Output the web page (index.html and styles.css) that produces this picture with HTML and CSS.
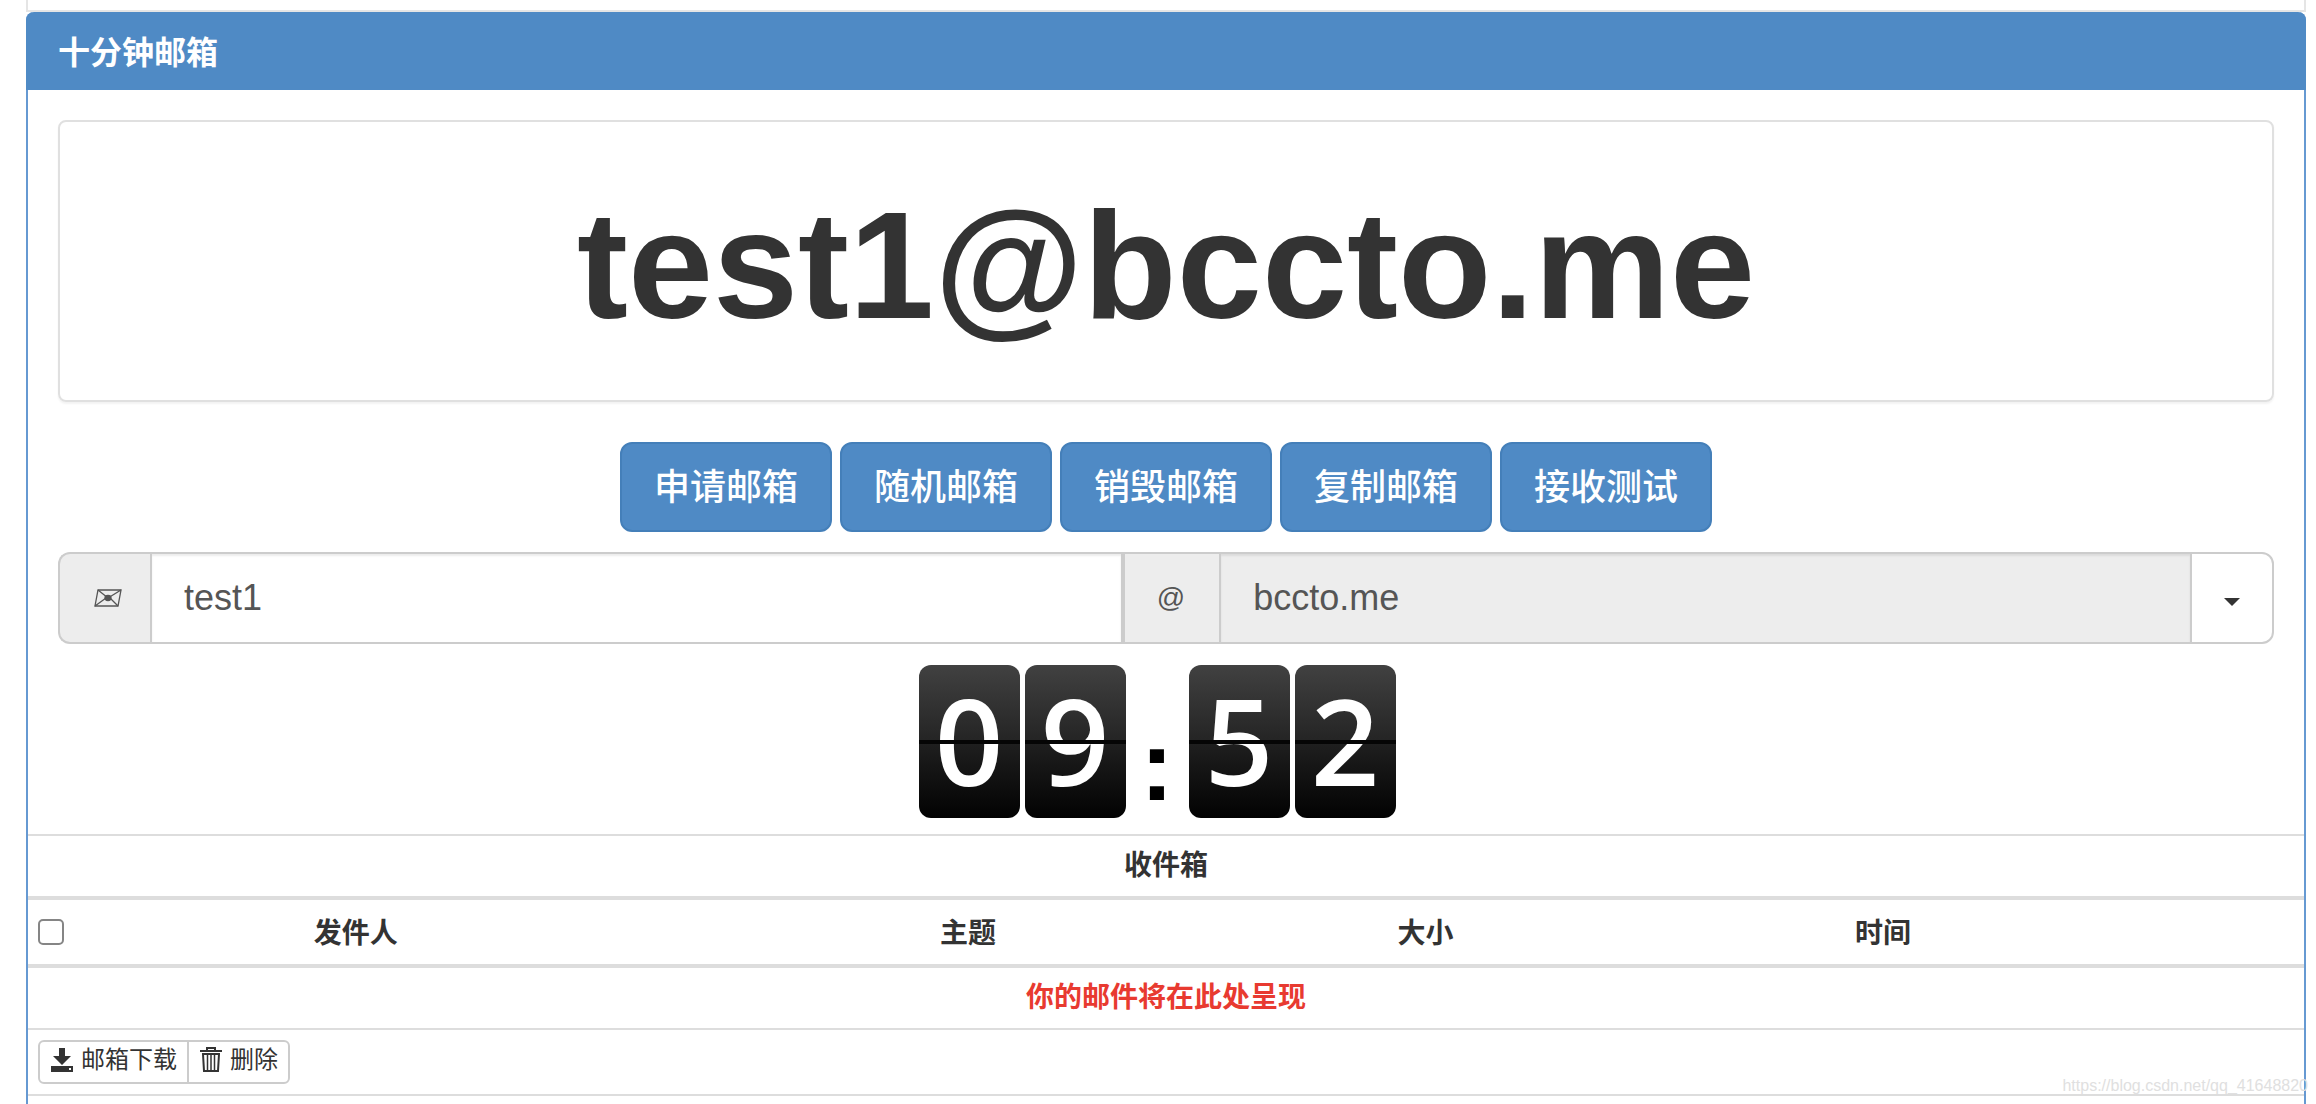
FILE: index.html
```html
<!DOCTYPE html>
<html lang="zh-CN">
<head>
    <meta charset="utf-8">
    <title>十分钟邮箱</title>
    <link rel="stylesheet" href="styles.css">
</head>
<body>

    <div class="container">
        <div class="top-box"></div>

        <div class="panel">
            <div class="panel-heading">十分钟邮箱</div>

            <div class="panel-body">
                <div class="thumbnail">
                    <h1>test1@bccto.me</h1>
                </div>

                <div class="btn-row">
                    <button type="button" class="btn-primary">申请邮箱</button>
                    <button type="button" class="btn-primary">随机邮箱</button>
                    <button type="button" class="btn-primary">销毁邮箱</button>
                    <button type="button" class="btn-primary">复制邮箱</button>
                    <button type="button" class="btn-primary">接收测试</button>
                </div>

                <div class="input-group">
                    <label class="addon" for="mailuser">
                        <svg width="28" height="20" viewBox="0 0 28 20" fill="none" stroke="#555" stroke-width="1.3">
                            <path d="M4 2H27L24 18H1Z"/>
                            <path d="M4 2L14 10L27 2M1 18L12 10M24 18L16 10"/>
                            <ellipse cx="14" cy="10" rx="3" ry="2.500" fill="#555"/>
                        </svg>
                    </label>
                    <input type="text" class="form-control" id="mailuser" value="test1">
                    <label class="addon" for="maildomain">@</label>
                    <input type="text" class="form-control" id="maildomain" value="bccto.me" readonly>
                    <button type="button" class="dropdown-toggle" aria-label="bccto.me"><span class="caret"></span></button>
                </div>
            </div>

            <!-- Countdown -->
            <div class="clock">
                <span class="digit">0</span>
                <span class="digit">9</span>
                <span class="colon">:</span>
                <span class="digit">5</span>
                <span class="digit">2</span>
            </div>

            <!-- Inbox -->
            <table class="table">
                <colgroup>
                    <col class="col-check">
                    <col class="col-from">
                    <col class="col-subject">
                    <col class="col-size">
                    <col class="col-time">
                    <col class="col-end">
                </colgroup>
                <thead>
                    <tr class="title-row">
                        <th colspan="6">收件箱</th>
                    </tr>
                    <tr class="head-row">
                        <th class="check-cell"><input type="checkbox" aria-label="收件箱"></th>
                        <th>发件人</th>
                        <th>主题</th>
                        <th>大小</th>
                        <th>时间</th>
                        <th></th>
                    </tr>
                </thead>
                <tbody>
                    <tr>
                        <td colspan="6" class="empty">你的邮件将在此处呈现</td>
                    </tr>
                    <tr>
                        <td colspan="6" class="actions">
                            <div class="btn-group">
                                <button type="button" class="btn-xs">
                                    <svg width="24" height="26" viewBox="0 0 24 26">
                                        <path fill="#333" d="M9 1H15V9H21L12 18L3 9H9Z"/>
                                        <path fill="#333" d="M1 19H23V25H1Z"/>
                                        <rect x="19" y="21" width="2" height="2" fill="#fff"/>
                                    </svg>
                                    邮箱下载
                                </button>
                                <button type="button" class="btn-xs">
                                    <svg width="24" height="26" viewBox="0 0 24 26" fill="none" stroke="#333" stroke-width="2">
                                        <path d="M1 4H23M8 4V1H16V4M4 7H20L19 24H5Z"/>
                                        <path d="M8.500 8V23M12 8V23M15.500 8V23" stroke-width="1.500"/>
                                    </svg>
                                    删除
                                </button>
                            </div>
                        </td>
                    </tr>
                </tbody>
            </table>
        </div>
    </div>

    <div class="watermark">https://blog.csdn.net/qq_41648820</div>

</body>
</html>
```
FILE: styles.css
```css
* {
    box-sizing: border-box;
}

body {
    margin: 0;
    font-family: "Liberation Sans", "Noto Sans CJK SC", sans-serif;
    font-size: 28px;
    line-height: 40px;
    color: #333;
    background: #fff;
}

button, input {
    font-family: inherit;
    margin: 0;
}

.container {
    display: flex;
    flex-direction: column;
    min-height: 100vh;
    padding: 0 10px 0 26px;
}

.top-box {
    height: 12px;
    border: 2px solid #e5e5e5;
    border-top: none;
}

.panel {
    flex: 1;
    border: 2px solid #6699d2;
    border-top: none;
    border-bottom: none;
    border-radius: 8px 8px 0 0;
}

.panel-heading {
    margin: 0 -2px;
    padding: 21px 32px 17px;
    font-size: 32px;
    font-weight: bold;
    color: #fff;
    background: #4f8ac5;
    border-radius: 8px 8px 0 0;
}

.panel-body {
    padding: 30px 30px 0;
}

.thumbnail {
    padding: 62px 0 54px;
    margin-bottom: 40px;
    border: 2px solid #e0e0e0;
    border-radius: 8px;
    box-shadow: 0 2px 2px rgba(0, 0, 0, 0.05);
}

.thumbnail h1 {
    margin: 0;
    font-size: 153px;
    line-height: 162px;
    text-align: center;
}

.btn-row {
    display: flex;
    justify-content: center;
    gap: 8px;
    margin-bottom: 20px;
}

.btn-primary {
    padding: 20px 32px 18px;
    font-size: 36px;
    font-weight: 500;
    line-height: 48px;
    color: #fff;
    background: #4f8ac5;
    border: 2px solid #447fb9;
    border-radius: 12px;
    cursor: pointer;
}

/* mail address input */
.input-group {
    display: flex;
    height: 92px;
}

.addon {
    display: flex;
    align-items: center;
    justify-content: center;
    padding: 0 34px 0 32px;
    font-size: 28px;
    color: #555;
    background: #ededed;
    border: 2px solid #ccc;
    border-right: none;
}

.addon:first-child {
    padding: 0 28px 0 34px;
    border-radius: 12px 0 0 12px;
}

.form-control {
    flex: 1;
    min-width: 0;
    padding: 0 32px;
    font-size: 36px;
    color: #555;
    background: #fff;
    border: 2px solid #ccc;
    box-shadow: inset 0 2px 2px rgba(0, 0, 0, 0.075);
}

.form-control[readonly] {
    background: #ededed;
}

.dropdown-toggle {
    display: flex;
    align-items: center;
    padding: 8px 32px 0;
    margin-left: -2px;
    background: #fff;
    border: 2px solid #ccc;
    border-radius: 0 12px 12px 0;
    cursor: pointer;
}

.caret {
    border: 8px solid transparent;
    border-top-color: #333;
    border-bottom: none;
}

/* flip clock */
.clock {
    display: flex;
    justify-content: center;
    gap: 5px;
    padding: 21px 18px 16px 0;
}

.digit {
    position: relative;
    width: 101px;
    height: 153px;
    font-family: "Open Sans", "Noto Sans", sans-serif;
    font-size: 120px;
    font-weight: 600;
    line-height: 150px;
    text-align: center;
    color: #fff;
    background: linear-gradient(#414141, #242424 50%, #1f1f1f 51%, #020202);
    border-radius: 12px;
}

.digit::after {
    content: "";
    position: absolute;
    left: 0;
    right: 0;
    top: 75px;
    height: 4px;
    background: #050505;
}

.colon {
    width: 53px;
    font-size: 100px;
    font-weight: bold;
    line-height: 200px;
    height: 153px;
    text-align: center;
    color: #000;
}

/* inbox table */
.table {
    width: 100%;
    table-layout: fixed;
    border-collapse: separate;
    border-spacing: 0;
    border-top: 2px solid #ddd;
}

.col-check { width: 2%; }
.col-from { width: 24.8%; }
.col-subject { width: 29%; }
.col-size { width: 11.2%; }
.col-time { width: 29%; }
.col-end { width: 4%; }

.table th, .table td {
    padding: 10px;
    text-align: center;
    border-bottom: 2px solid #ddd;
}

.table th {
    border-bottom-width: 4px;
}

.table .head-row th {
    padding: 14px 10px 10px;
}

.table .check-cell {
    text-align: left;
    line-height: 0;
}

.check-cell input {
    appearance: none;
    display: block;
    width: 26px;
    height: 26px;
    margin-bottom: 4px;
    background: #fff;
    border: 2px solid #858585;
    border-radius: 5px;
}

.table .empty {
    font-weight: bold;
    color: #e83a30;
}

.btn-group {
    display: flex;
}

.btn-xs {
    display: flex;
    align-items: center;
    gap: 7px;
    height: 44px;
    padding: 0 10px 4px;
    font-size: 24px;
    line-height: 36px;
    color: #333;
    background: #fff;
    border: 2px solid #ccc;
    border-radius: 6px 0 0 6px;
    cursor: pointer;
}

.btn-xs + .btn-xs {
    margin-left: -2px;
    border-radius: 0 6px 6px 0;
}

.watermark {
    position: absolute;
    right: 8px;
    bottom: 8px;
    font-size: 16px;
    line-height: 20px;
    color: #e0e0e0;
}
```
